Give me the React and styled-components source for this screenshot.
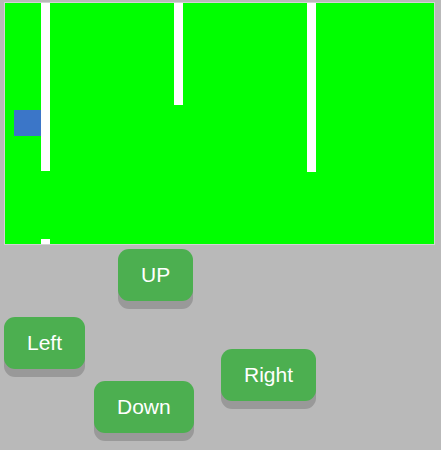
import React from 'react';
import styled, { createGlobalStyle } from 'styled-components';

const GlobalStyle = createGlobalStyle`
html, body {
  margin: 0;
  padding: 0;
  background: #b9b9b9;
  font-family: "Liberation Sans", Arial, sans-serif;
}
`

const obstacles = [
  { x: 36, y: 0, w: 9, h: 168 },
  { x: 36, y: 236, w: 9, h: 5 },
  { x: 169, y: 0, w: 9, h: 102 },
  { x: 302, y: 0, w: 9, h: 169 },
]

const controls = [
  { label: 'UP', row: '1 / 2', left: 114 },
  { label: 'Left', row: '3 / 5', left: 0 },
  { label: 'Right', row: '4 / 7', left: 217 },
  { label: 'Down', row: '6 / 8', left: 90 },
]

const App = () => {
  return (
    <Page>
      <GlobalStyle />
      <GameArea>
        {obstacles.map((o, i) => (
          <Obstacle key={i} style={{ left: o.x, top: o.y, width: o.w, height: o.h }} />
        ))}
        <Player />
      </GameArea>
      <Controls>
        {controls.map(c => (
          <PadButton key={c.label} $row={c.row} $left={c.left}>
            {c.label}
          </PadButton>
        ))}
      </Controls>
    </Page>
  )
}

const Page = styled.div`
padding: 2px 0 0 4px;
`

const GameArea = styled.div`
position: relative;
width: 429px;
height: 241px;
background: #00ff00;
border: 1px solid #d3d3d3;
overflow: hidden;
`

const Obstacle = styled.div`
position: absolute;
background: #ffffff;
`

const Player = styled.div`
position: absolute;
left: 9px;
top: 107px;
width: 27px;
height: 26px;
background: #3b76c8;
`

const Controls = styled.div`
display: grid;
grid-template-columns: 1fr;
grid-template-rows: 52px 16px 32px 20px 12px 20px 32px;
margin-top: 4px;
padding-bottom: 10px;
`

const PadButton = styled.button`
grid-row: ${p => p.$row};
grid-column: 1;
justify-self: start;
margin-left: ${p => p.$left}px;
height: 52px;
padding: 0 23px;
border: none;
border-radius: 11px;
background: #4caf50;
color: #ffffff;
font-family: "Liberation Sans", Arial, sans-serif;
font-size: 21px;
line-height: 22px;
box-shadow: 0 8px #999999;
cursor: pointer;
`

export default App
